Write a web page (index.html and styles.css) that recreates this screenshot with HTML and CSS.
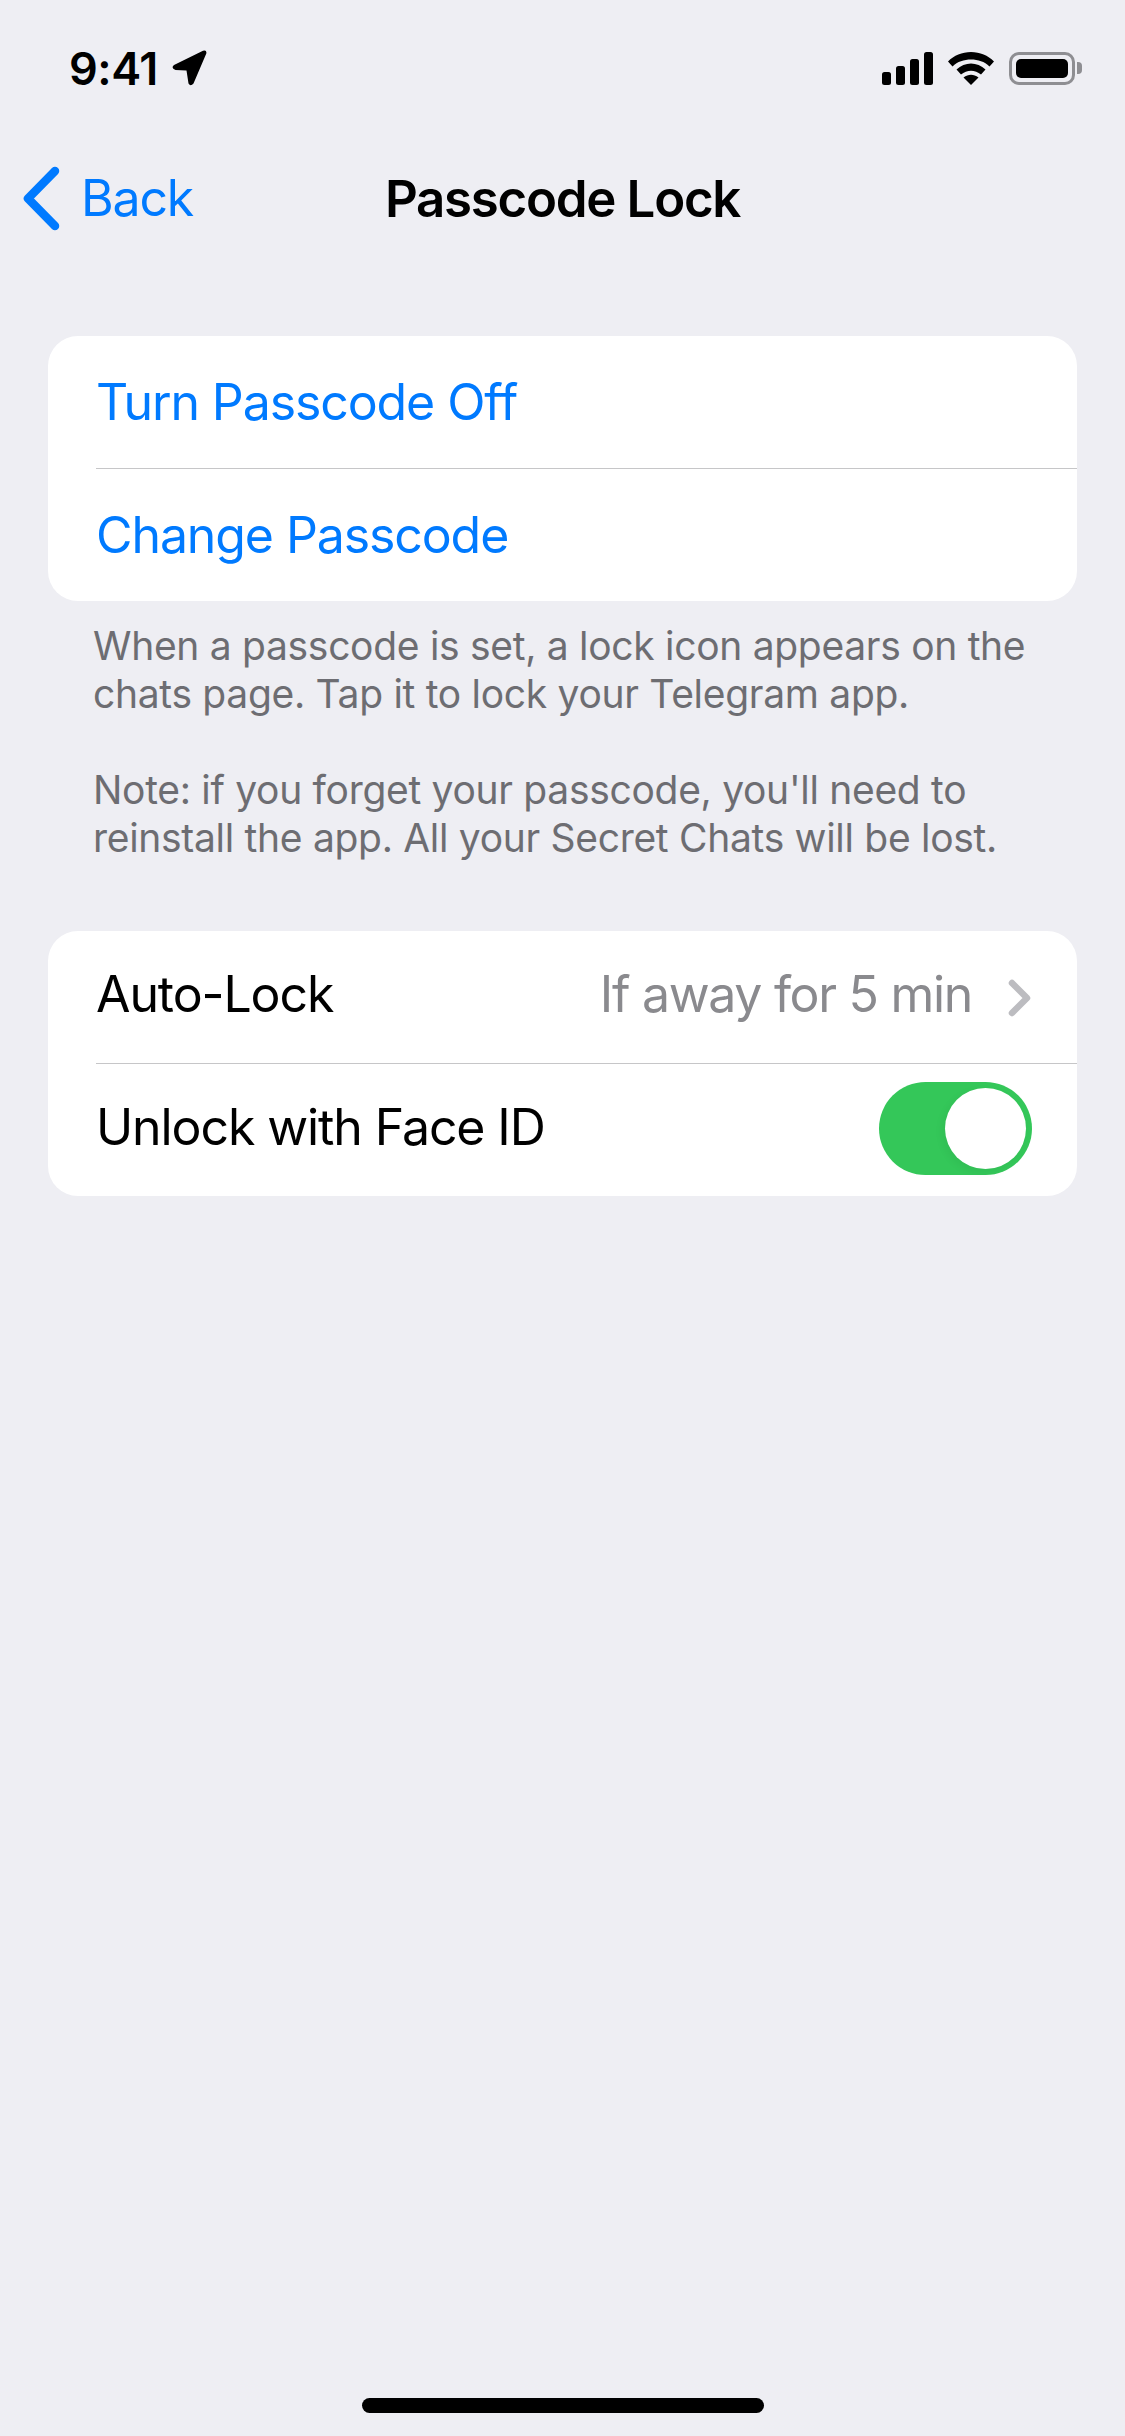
FILE: index.html
```html
<!DOCTYPE html>
<html lang="en">
<head>
<meta charset="UTF-8">
<meta name="viewport" content="width=device-width, initial-scale=1.0">
<title>Passcode Lock</title>
<link rel="stylesheet" href="styles.css">
</head>
<body>
    <div class="status-bar">
        <div class="status-left">
            <span class="time">9:41</span>
            <svg class="icon-location" width="35" height="36" viewBox="0 0 35 36"><path d="M2 15 L31 0.800 Q35 -0.500 34.300 3.500 L21.500 33.500 Q18.500 37 16.500 33.500 L14.500 20.500 L3.500 20 Q-1.500 18 2 15 Z" fill="#000"/></svg>
        </div>
        <div class="status-right">
            <svg width="51" height="33" viewBox="0 0 51 33"><rect x="0" y="20" width="9" height="13" rx="2.5"/><rect x="14" y="14" width="9" height="19" rx="2.5"/><rect x="28" y="7" width="9" height="26" rx="2.5"/><rect x="42" y="0" width="9" height="33" rx="2.5"/></svg>
            <svg width="46" height="33" viewBox="0 0 46 33"><path d="M23 0 C32 0 40 3.500 46 9.500 L41.500 14.500 C36.500 9.500 30 7.500 23 7.500 C16 7.500 9.500 9.500 4.500 14.500 L0 9.500 C6 3.500 14 0 23 0 Z"/><path d="M23 11.500 C28 11.500 33.500 13.500 37.500 17.500 L33 22.500 C30 20 26.500 18.700 23 18.700 C19.500 18.700 16 20 13 22.500 L8.500 17.500 C12.500 13.500 18 11.500 23 11.500 Z"/><path d="M23 22.800 C25.500 22.800 28 23.700 30.500 25.500 L23 33 L15.500 25.500 C18 23.700 20.500 22.800 23 22.800 Z"/></svg>
            <div class="battery">
                <div class="battery-body"><div class="battery-fill"></div></div>
                <div class="battery-nub"></div>
            </div>
        </div>
    </div>

    <div class="nav-bar">
        <div class="nav-back">
            <svg width="38" height="65" viewBox="0 0 38 65"><path d="M33 5 L6 32.500 L33 60" fill="none" stroke="#007aff" stroke-width="8.500" stroke-linecap="round" stroke-linejoin="round"/></svg>
            <span>Back</span>
        </div>
        <div class="nav-title">Passcode Lock</div>
        <div></div>
    </div>

    <div class="content">
        <div class="card">
            <div class="row row-link">Turn Passcode Off</div>
            <div class="row row-link">Change Passcode</div>
        </div>
        <div class="note">
            <p>When a passcode is set, a lock icon appears on the<br>chats page. Tap it to lock your Telegram app.</p>
            <p>Note: if you forget your passcode, you'll need to<br>reinstall the app. All your Secret Chats will be lost.</p>
        </div>
        <div class="card">
            <div class="row">
                <span class="row-label">Auto-Lock</span>
                <span class="row-label row-value">If away for 5 min</span>
                <svg class="row-chevron" width="24" height="38" viewBox="0 0 24 38"><path d="M4 4 L19 19 L4 34" fill="none" stroke="#bcbcc0" stroke-width="6.500" stroke-linecap="round" stroke-linejoin="round"/></svg>
            </div>
            <div class="row">
                <span class="row-label">Unlock with Face ID</span>
                <div class="switch"><div class="switch-knob"></div></div>
            </div>
        </div>
    </div>

    <div class="home-indicator"></div>
</body>
</html>
```

FILE: styles.css
```css
* {
    box-sizing: border-box;
}
body {
    font-family: Inter, "Liberation Sans", sans-serif;
    margin: 0;
    width: 1125px;
    height: 2436px;
    background-color: #eeeef3;
    color: #000;
    display: flex;
    flex-direction: column;
    overflow: hidden;
}
.status-bar {
    display: flex;
    justify-content: space-between;
    align-items: center;
    height: 132px;
    padding: 4px 43px 0 69px;
}
.status-left {
    display: flex;
    align-items: center;
    gap: 14px;
}
.time {
    font-size: 45px;
    font-weight: 600;
    letter-spacing: -0.5px;
}
.status-right {
    display: flex;
    align-items: center;
    gap: 15px;
}
.battery {
    display: flex;
    align-items: center;
    gap: 2px;
}
.battery-body {
    width: 66px;
    height: 33px;
    padding: 4px;
    border: 3px solid #8e8e92;
    border-radius: 10px;
}
.battery-fill {
    width: 100%;
    height: 100%;
    background-color: #000;
    border-radius: 5px;
}
.battery-nub {
    width: 5px;
    height: 12px;
    background-color: #8e8e92;
    border-radius: 0 4px 4px 0;
}
.nav-bar {
    display: grid;
    grid-template-columns: 1fr auto 1fr;
    align-items: center;
    height: 132px;
}
.nav-back {
    display: flex;
    align-items: center;
    gap: 21px;
    margin-left: 22px;
    color: #007aff;
    font-size: 50px;
    letter-spacing: -1.2px;
}
.nav-title {
    font-size: 51px;
    font-weight: 600;
    letter-spacing: -1.3px;
}
.content {
    padding: 72px 48px 0 48px;
}
.card {
    background-color: #fff;
    border-radius: 30px;
    overflow: hidden;
}
.row {
    display: flex;
    align-items: center;
    height: 133px;
    margin-left: 48px;
    padding-right: 45px;
    font-size: 50px;
    letter-spacing: -1.1px;
    border-bottom: 1px solid #c6c6c8;
}
.row:last-child {
    height: 132px;
    border-bottom: none;
}
.row-link {
    color: #007aff;
}
.row-label {
    padding-bottom: 6px;
}
.row .row-value {
    margin-left: auto;
    color: #8a8a8e;
    letter-spacing: -1.3px;
}
.row-chevron {
    margin: 1px 0 0 36px;
}
.switch {
    display: flex;
    justify-content: flex-end;
    align-items: center;
    margin: 0 0 3px auto;
    width: 153px;
    height: 93px;
    padding-right: 6px;
    background-color: #34c759;
    border-radius: 47px;
}
.switch-knob {
    width: 81px;
    height: 81px;
    background-color: #fff;
    border-radius: 50%;
    box-shadow: -3px 3px 8px rgba(0, 0, 0, 0.05);
}
.note {
    padding: 21px 48px 69px 45px;
    color: #6d6d72;
    font-size: 39px;
    line-height: 48px;
    letter-spacing: -0.3px;
}
.note p {
    margin: 0 0 48px 0;
}
.note p:last-child {
    margin-bottom: 0;
}
.home-indicator {
    width: 402px;
    height: 15px;
    margin: auto auto 23px auto;
    background-color: #000;
    border-radius: 8px;
}
```
